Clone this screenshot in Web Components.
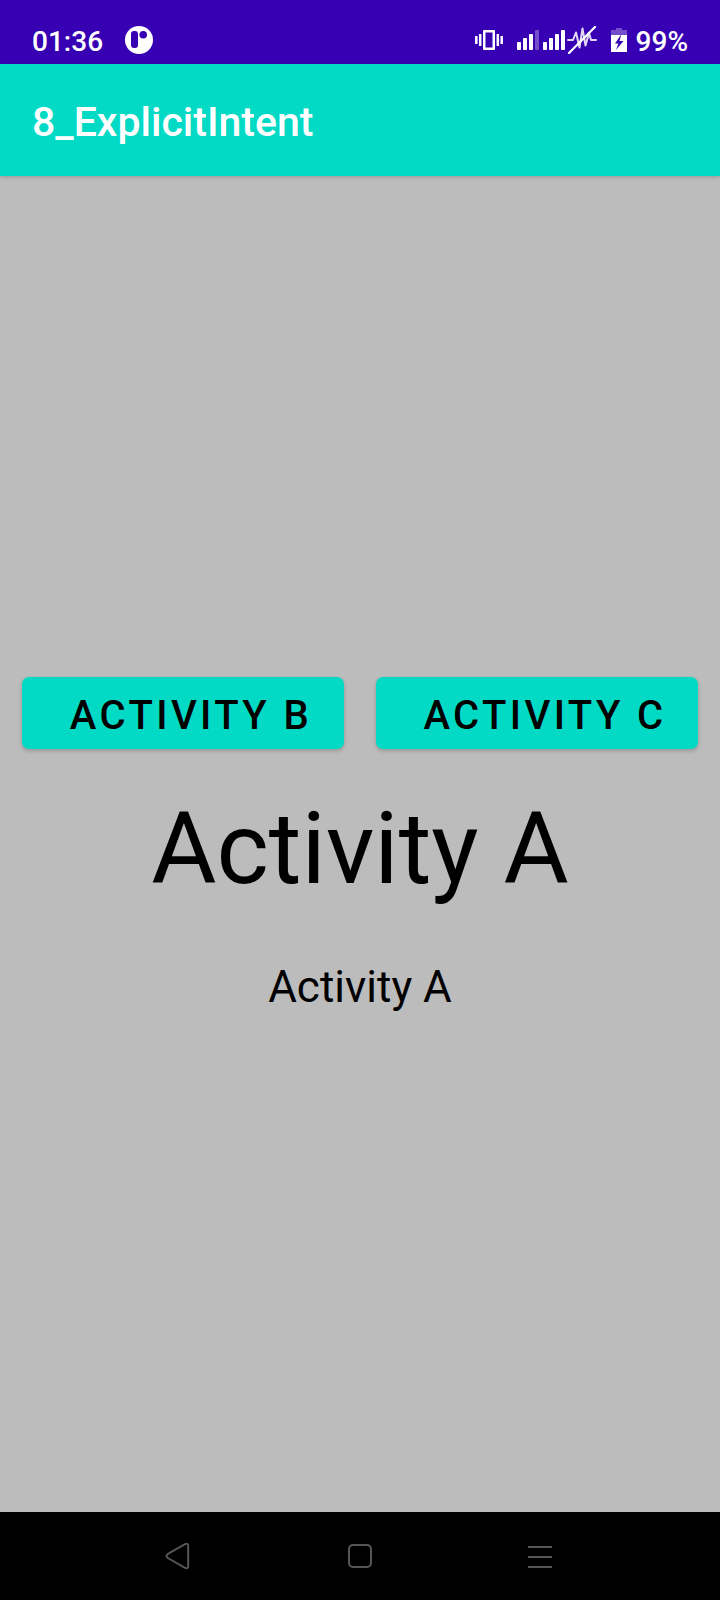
<!DOCTYPE html>
<html lang="en">
<head>
<meta charset="utf-8">
<meta name="viewport" content="width=device-width, initial-scale=1">
<title>8_ExplicitIntent</title>
<style>
html, body { margin: 0; height: 100%; }
body { font-family: Roboto, "Liberation Sans", sans-serif; background: #bcbcbc; color: #000; }
</style>
</head>
<body>
<app-screen>
  <status-bar slot="status" time="01:36" battery="99%"></status-bar>
  <app-bar slot="bar">8_ExplicitIntent</app-bar>
  <activity-view>
    <action-button slot="actions">ACTIVITY B</action-button>
    <action-button slot="actions">ACTIVITY C</action-button>
    <span slot="title">Activity A</span>
    <span slot="text">Activity A</span>
  </activity-view>
  <nav-bar slot="nav"></nav-bar>
</app-screen>
<script>
class BaseElement extends HTMLElement {
  constructor() {
    super();
    this.attachShadow({ mode: 'open' }).innerHTML = this.constructor.markup;
  }
}

customElements.define('app-screen', class extends BaseElement {
  static markup = `
    <style>
      :host { display: flex; flex-direction: column; min-height: 100%; }
      main { flex: 1; display: flex; }
    </style>
    <slot name="status"></slot>
    <slot name="bar"></slot>
    <main><slot></slot></main>
    <slot name="nav"></slot>`;
});

customElements.define('status-bar', class extends BaseElement {
  static markup = `
    <style>
      :host { display: flex; justify-content: space-between; align-items: center; box-sizing: border-box;
        height: 64px; padding: 16px 32px 0; background: #3700b3; color: #fff;
        font-size: 28px; font-weight: 500; line-height: 32px; }
      div { display: flex; align-items: center; }
      span { padding-top: 4px; }
      svg { display: block; flex: none; }
      .left { gap: 22px; }
      .vibrate { margin-right: 14px; }
      .signal { margin-right: 4px; }
      .signal.last { margin-right: 2px; }
      .wave { margin-right: 14px; }
      .battery { margin-right: 9px; }
    </style>
    <div class="left">
      <span class="time"></span>
      <svg width="28" height="28" viewBox="0 0 28 28" aria-hidden="true">
        <circle cx="14" cy="14" r="14" fill="#fff"/>
        <rect x="6" y="5" width="7" height="17" rx="3" fill="#3700b3"/>
        <circle cx="18.2" cy="8.8" r="3.8" fill="#3700b3"/>
      </svg>
    </div>
    <div>
      <svg class="vibrate" width="28" height="20" viewBox="0 0 28 20" aria-hidden="true">
        <path fill="#fff" fill-rule="evenodd" d="M9 0h10q1 0 1 1v18q0 1-1 1H9q-1 0-1-1V1q0-1 1-1zM10.500 2.500v15h7v-15z"/>
        <path fill="none" stroke="#fff" stroke-width="2.500" d="M5.200 4v12M22.800 4v12M1.300 6v8M26.700 6v8"/>
      </svg>
      <svg class="signal" width="22" height="20" viewBox="0 0 22 20" fill="#fff" aria-hidden="true">
        <rect y="12" width="4" height="8" rx=".7"/><rect x="6" y="8" width="4" height="12" rx=".7"/>
        <rect x="12" y="4" width="4" height="16" rx=".7"/><rect x="18" width="4" height="20" rx=".7" opacity=".3"/>
      </svg>
      <svg class="signal last" width="22" height="20" viewBox="0 0 22 20" fill="#fff" aria-hidden="true">
        <rect y="12" width="4" height="8" rx=".7"/><rect x="6" y="8" width="4" height="12" rx=".7"/>
        <rect x="12" y="4" width="4" height="16" rx=".7"/><rect x="18" width="4" height="20" rx=".7"/>
      </svg>
      <svg class="wave" width="30" height="28" viewBox="0 0 30 28" fill="none" stroke="#fff" stroke-linejoin="round" stroke-linecap="round" aria-hidden="true">
        <path d="M1 14h5l3-7.500 3.500 15 3-19 3 17 3.500-12.500 2 7h5" stroke-width="2" opacity=".85"/>
        <path d="M2 27L28 1" stroke-width="2.200"/>
      </svg>
      <svg class="battery" width="16" height="24" viewBox="0 0 16 24" aria-hidden="true">
        <path d="M5 0h6v2h5v5H0V2h5z" fill="#fff" opacity=".3"/>
        <path d="M0 7h16v17H0z" fill="#fff"/>
        <path d="M10.500 6L4 15.500h3.500L5 22l7.500-9H8.500z" fill="#3700b3"/>
      </svg>
      <span class="charge"></span>
    </div>`;
  connectedCallback() {
    this.shadowRoot.querySelector('.time').textContent = this.getAttribute('time');
    this.shadowRoot.querySelector('.charge').textContent = this.getAttribute('battery');
  }
});

customElements.define('app-bar', class extends BaseElement {
  static markup = `
    <style>
      :host { display: flex; align-items: center; box-sizing: border-box; height: 112px; padding: 4px 32px 0;
        position: relative; background: #03dac5; color: #fff; box-shadow: 0 1px 4px rgba(0,0,0,.2); }
      h1 { margin: 0; font-size: 41px; line-height: 48px; font-weight: 500; }
    </style>
    <h1><slot></slot></h1>`;
});

customElements.define('activity-view', class extends BaseElement {
  static markup = `
    <style>
      :host { flex: 1; min-width: 0; display: flex; flex-direction: column; justify-content: center; text-align: center;
        box-sizing: border-box; padding: 0 22px; background: #bcbcbc; }
      .actions { display: grid; grid-template-columns: repeat(2, minmax(0, 1fr)); gap: 32px; }
      h2 { margin: 40px 0 54px; font-size: 100px; line-height: 120px; font-weight: 400; }
      p { margin: 0; font-size: 44px; line-height: 48px; }
    </style>
    <div class="actions"><slot name="actions"></slot></div>
    <h2><slot name="title"></slot></h2>
    <p><slot name="text"></slot></p>`;
});

customElements.define('action-button', class extends BaseElement {
  static markup = `
    <style>
      :host { display: block; }
      button { display: block; width: 100%; height: 72px; padding: 6px 16px 0 32px; border: 0; border-radius: 7px;
        background: #03dac5; color: #000; font: 500 40px/48px Roboto, "Liberation Sans", sans-serif;
        letter-spacing: 0.085em; white-space: nowrap; text-align: center; box-shadow: 0 2px 4px rgba(0,0,0,.2); }
    </style>
    <button type="button"><slot></slot></button>`;
});

customElements.define('nav-bar', class extends BaseElement {
  static markup = `
    <style>
      :host { display: block; background: #000; }
      nav { display: grid; grid-template-columns: repeat(3, 1fr); height: 88px; padding: 0 12.5%; }
      button { display: flex; align-items: center; justify-content: center; padding: 0; border: 0; background: none; }
      svg { display: block; overflow: visible; fill: none; stroke: #555; stroke-width: 2; }
    </style>
    <nav>
      <button type="button" aria-label="Back"><svg width="28" height="28" viewBox="0 0 28 28"><path d="M1.500 12.200L18.500 2.300Q22.200 .6 22.200 4V24Q22.200 27.400 18.500 25.700L1.500 15.800Q-.400 14 1.500 12.200z"/></svg></button>
      <button type="button" aria-label="Home"><svg width="24" height="24" viewBox="0 0 24 24"><rect x="1" y="1" width="22" height="22" rx="4"/></svg></button>
      <button type="button" aria-label="Recent apps"><svg width="24" height="24" viewBox="0 0 24 24"><path d="M0 3h24M0 13h24M0 23h24"/></svg></button>
    </nav>`;
});
</script>
</body>
</html>
